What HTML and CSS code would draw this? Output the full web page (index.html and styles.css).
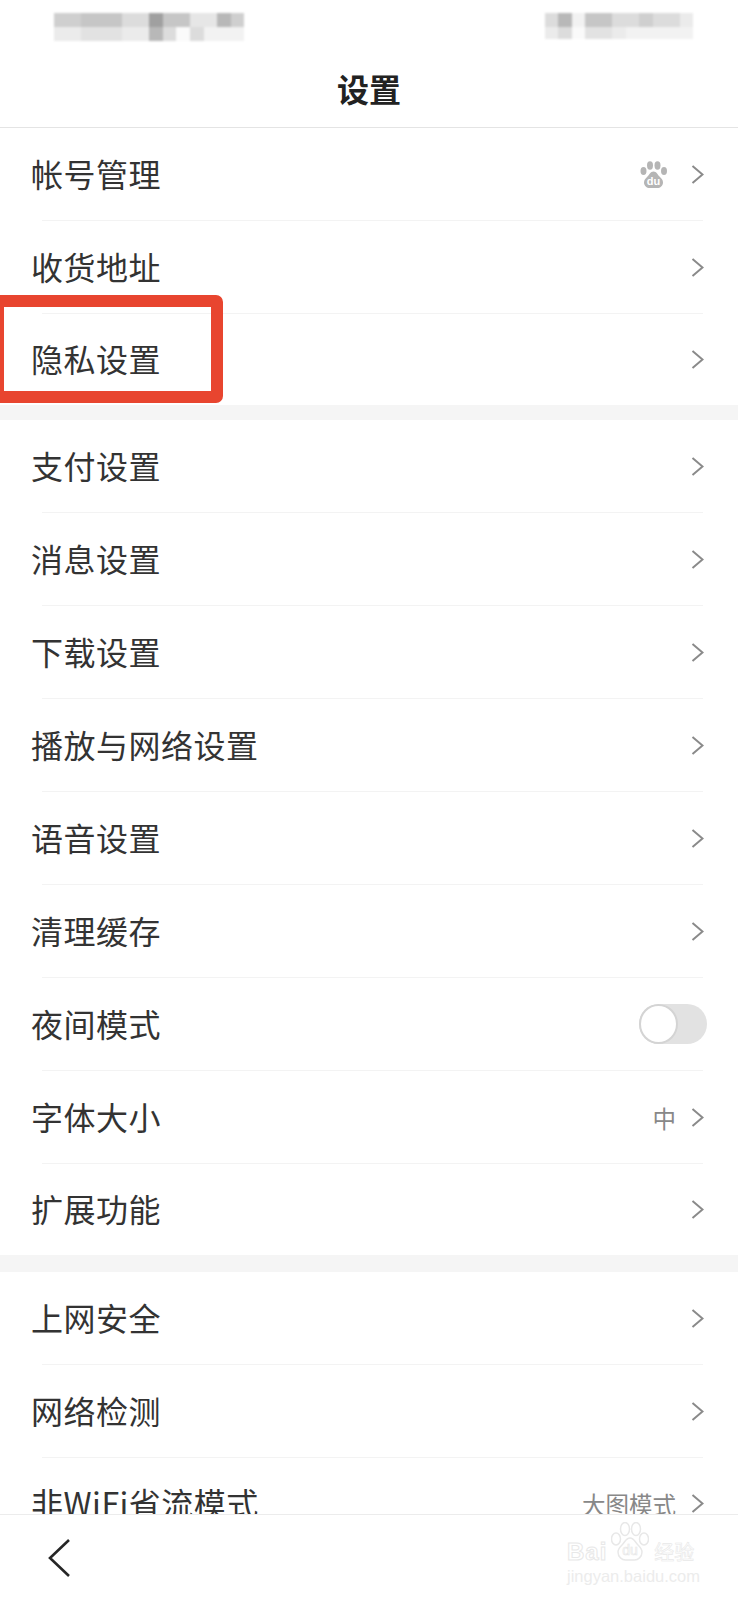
FILE: index.html
```html
<!DOCTYPE html>
<html lang="zh-CN">
<head>
    <meta charset="UTF-8">
    <meta name="viewport" content="width=device-width, initial-scale=1.0">
    <title>设置</title>
    <link rel="stylesheet" href="styles.css">
</head>
<body>

    <svg class="defs" width="0" height="0">
        <symbol id="chevron" viewBox="0 0 13 19">
            <polyline points="1.5,1 11.5,9.5 1.5,18" fill="none" stroke="#8a8a8a" stroke-width="2"></polyline>
        </symbol>
    </svg>

    <div class="app">

        <!-- Header Section -->
        <header>
            <div class="status">
                <div class="mosaic mosaic-left">
                    <span class="s3"></span><span class="s3"></span><span class="s4"></span><span class="s4"></span><span class="s4"></span><span class="s2"></span><span class="s2"></span><span class="s0"></span><span class="s4"></span><span class="s4"></span><span class="s1"></span><span class="s1"></span><span class="s5"></span><span class="s3"></span>
                    <span class="s7"></span><span class="s7"></span><span class="s6"></span><span class="s6"></span><span class="s6"></span><span class="s7"></span><span class="s7"></span><span class="s5"></span><span class="s2"></span><span class="s9"></span><span class="s2"></span><span class="s8"></span><span class="s8"></span><span class="s8"></span>
                </div>
                <div class="mosaic mosaic-right">
                    <span class="s2"></span><span class="s5"></span><span class="s8"></span><span class="s4"></span><span class="s4"></span><span class="s2"></span><span class="s2"></span><span class="s3"></span><span class="s2"></span><span class="s2"></span><span class="s7"></span>
                    <span class="s7"></span><span class="s2"></span><span class="s9"></span><span class="s6"></span><span class="s6"></span><span class="s7"></span><span class="s8"></span><span class="s8"></span><span class="s8"></span><span class="s8"></span><span class="s8"></span>
                </div>
            </div>
            <h1>设置</h1>
        </header>

        <!-- Settings List -->
        <div class="list">
            <div class="group">
                <div class="row">
                    <span class="label">帐号管理</span>
                    <svg class="paw" viewBox="0 0 27 27">
                        <ellipse cx="3.5" cy="10" rx="3" ry="4" fill="#b5b5b5"></ellipse>
                        <ellipse cx="10" cy="4.5" rx="3" ry="4.2" fill="#b5b5b5"></ellipse>
                        <ellipse cx="17.5" cy="4.5" rx="3" ry="4.2" fill="#b5b5b5"></ellipse>
                        <ellipse cx="24" cy="10" rx="3" ry="4" fill="#b5b5b5"></ellipse>
                        <path d="M13.5 10.5c-3 0-4 3-6 5-2 2-3.500 3.500-3.500 6 0 3.500 3 5.500 5.500 5.500h8c2.500 0 5.500-2 5.500-5.500 0-2.500-1.500-4-3.500-6-2-2-3-5-6-5z" fill="#b5b5b5"></path>
                        <text x="13.500" y="24" class="paw-text">du</text>
                    </svg>
                    <svg class="chevron"><use href="#chevron"></use></svg>
                </div>
                <div class="row">
                    <span class="label">收货地址</span>
                    <svg class="chevron"><use href="#chevron"></use></svg>
                </div>
                <div class="row">
                    <span class="label">隐私设置</span>
                    <svg class="chevron"><use href="#chevron"></use></svg>
                </div>
            </div>

            <div class="group group-main">
                <div class="row">
                    <span class="label">支付设置</span>
                    <svg class="chevron"><use href="#chevron"></use></svg>
                </div>
                <div class="row">
                    <span class="label">消息设置</span>
                    <svg class="chevron"><use href="#chevron"></use></svg>
                </div>
                <div class="row">
                    <span class="label">下载设置</span>
                    <svg class="chevron"><use href="#chevron"></use></svg>
                </div>
                <div class="row">
                    <span class="label">播放与网络设置</span>
                    <svg class="chevron"><use href="#chevron"></use></svg>
                </div>
                <div class="row">
                    <span class="label">语音设置</span>
                    <svg class="chevron"><use href="#chevron"></use></svg>
                </div>
                <div class="row">
                    <span class="label">清理缓存</span>
                    <svg class="chevron"><use href="#chevron"></use></svg>
                </div>
                <div class="row">
                    <span class="label">夜间模式</span>
                    <div class="toggle"><div class="knob"></div></div>
                </div>
                <div class="row">
                    <span class="label">字体大小</span>
                    <span class="value">中</span>
                    <svg class="chevron"><use href="#chevron"></use></svg>
                </div>
                <div class="row">
                    <span class="label">扩展功能</span>
                    <svg class="chevron"><use href="#chevron"></use></svg>
                </div>
            </div>

            <div class="group">
                <div class="row">
                    <span class="label">上网安全</span>
                    <svg class="chevron"><use href="#chevron"></use></svg>
                </div>
                <div class="row">
                    <span class="label">网络检测</span>
                    <svg class="chevron"><use href="#chevron"></use></svg>
                </div>
                <div class="row">
                    <span class="label">非WiFi省流模式</span>
                    <span class="value">大图模式</span>
                    <svg class="chevron"><use href="#chevron"></use></svg>
                </div>
            </div>
        </div>

        <!-- Bottom Nav -->
        <footer>
            <svg class="back" viewBox="0 0 24 40">
                <polyline points="22,2 3,20 22,38" fill="none" stroke="#262626" stroke-width="2.600"></polyline>
            </svg>
        </footer>

        <!-- Red annotation box -->
        <div class="mark"></div>

        <!-- Watermark -->
        <div class="watermark">
            <div class="wm-top">
                <span class="wm-bai">Bai</span>
                <svg class="wm-paw" viewBox="0 0 38 40">
                    <ellipse cx="5" cy="17" rx="4.500" ry="6" fill="none" stroke="#e8e8e8" stroke-width="1.500"></ellipse>
                    <ellipse cx="14" cy="7" rx="4.500" ry="6.500" fill="none" stroke="#e8e8e8" stroke-width="1.500"></ellipse>
                    <ellipse cx="25" cy="7" rx="4.500" ry="6.500" fill="none" stroke="#e8e8e8" stroke-width="1.500"></ellipse>
                    <ellipse cx="33" cy="17" rx="4.500" ry="6" fill="none" stroke="#e8e8e8" stroke-width="1.500"></ellipse>
                    <path d="M19 16c-4 0-5 4-8 7-2 2-4 4-4 7 0 5 4 8 7.500 8h9c3.500 0 7.500-3 7.500-8 0-3-2-5-4-7-3-3-4-7-8-7z" fill="none" stroke="#e8e8e8" stroke-width="1.500"></path>
                    <text x="19" y="33" class="wm-du">du</text>
                </svg>
                <span class="wm-jy">经验</span>
            </div>
            <div class="wm-url">jingyan.baidu.com</div>
        </div>

    </div>

</body>
</html>
```

FILE: styles.css
```css
* {
    box-sizing: border-box;
}

body {
    font-family: "Noto Sans CJK SC", "Liberation Sans", sans-serif;
    background-color: #fff;
    margin: 0;
}

.defs {
    position: absolute;
}

.app {
    position: relative;
    width: 738px;
    height: 1600px;
    display: flex;
    flex-direction: column;
    overflow: hidden;
}

header {
    height: 128px;
    flex-shrink: 0;
    border-bottom: 1px solid #e4e4e4;
    background-color: #fff;
}

.status {
    display: flex;
    justify-content: space-between;
    padding: 13px 45px 0 54px;
}

.mosaic {
    display: grid;
    filter: blur(1px);
}

.mosaic-left {
    grid-template-columns: repeat(14, 13.6px);
    grid-template-rows: 14px 14px;
}

.mosaic-right {
    grid-template-columns: repeat(11, 13.5px);
    grid-template-rows: 14px 12px;
}

.s0 { background-color: #a0a0a0; }
.s1 { background-color: #e6e6e6; }
.s2 { background-color: #dcdcdc; }
.s3 { background-color: #cfcfcf; }
.s4 { background-color: #c6c6c6; }
.s5 { background-color: #b8b8b8; }
.s6 { background-color: #e2e2e2; }
.s7 { background-color: #ebebeb; }
.s8 { background-color: #f2f2f2; }
.s9 { background-color: #fafafa; }

h1 {
    margin: 26px 0 0;
    text-align: center;
    font-size: 32px;
    line-height: 42px;
    font-weight: 700;
    color: #222;
}

.list {
    flex: 1;
    min-height: 0;
    overflow: hidden;
    background-color: #f5f5f5;
}

.group {
    background-color: #fff;
    margin-bottom: 15px;
}

.group-main {
    margin-bottom: 17px;
}

.row {
    position: relative;
    height: 93px;
    display: flex;
    align-items: center;
    padding: 0 34px 0 31px;
}

.row:last-child {
    height: 91px;
}

.row::after {
    content: "";
    position: absolute;
    left: 42px;
    right: 35px;
    bottom: 0;
    height: 1px;
    background-color: #f3f3f3;
}

.row:last-child::after {
    display: none;
}

.label {
    flex: 1;
    margin-bottom: 3px;
    font-size: 32px;
    letter-spacing: 0.5px;
    color: #333;
}

.value {
    font-size: 23.500px;
    color: #888;
    margin-right: 15px;
}

.chevron {
    width: 13px;
    height: 19px;
    flex-shrink: 0;
}

.paw {
    width: 27px;
    height: 27px;
    margin-right: 24px;
}

.paw-text {
    font-family: "Liberation Sans", sans-serif;
    font-size: 11px;
    font-weight: 700;
    fill: #fff;
    text-anchor: middle;
}

.toggle {
    width: 68px;
    height: 40px;
    margin: 0 -3px 2px 0;
    border-radius: 20px;
    background-color: #e2e2e2;
}

.knob {
    width: 39px;
    height: 40px;
    border-radius: 50%;
    background-color: #fff;
    border: 2px solid #d4d4d4;
}

footer {
    height: 86px;
    flex-shrink: 0;
    border-top: 1px solid #ececec;
    background-color: #fff;
    padding: 23px 0 0 47px;
}

.back {
    display: block;
    width: 24px;
    height: 40px;
}

.mark {
    position: absolute;
    left: -8px;
    top: 295px;
    width: 231px;
    height: 108px;
    border: 12px solid #e8452f;
    border-radius: 7px;
}

.watermark {
    position: absolute;
    left: 567px;
    top: 1520px;
    width: 132px;
}

.wm-top {
    display: flex;
    align-items: flex-end;
    height: 44px;
}

.wm-bai {
    font-family: "Liberation Sans", sans-serif;
    font-size: 24px;
    line-height: 24px;
    font-weight: 700;
    color: #fff;
    -webkit-text-stroke: 1px #e8e8e8;
    letter-spacing: 1px;
}

.wm-paw {
    width: 38px;
    height: 40px;
    margin: 0 5px 2px 4px;
}

.wm-du {
    font-family: "Liberation Sans", sans-serif;
    font-size: 14px;
    fill: #fff;
    stroke: #e8e8e8;
    stroke-width: 0.7;
    text-anchor: middle;
}

.wm-jy {
    font-size: 20px;
    line-height: 24px;
    color: #fff;
    -webkit-text-stroke: 0.6px #e8e8e8;
}

.wm-url {
    margin-top: 2px;
    font-family: "Liberation Sans", sans-serif;
    font-size: 16.500px;
    line-height: 20px;
    color: #ececec;
    white-space: nowrap;
}
```
